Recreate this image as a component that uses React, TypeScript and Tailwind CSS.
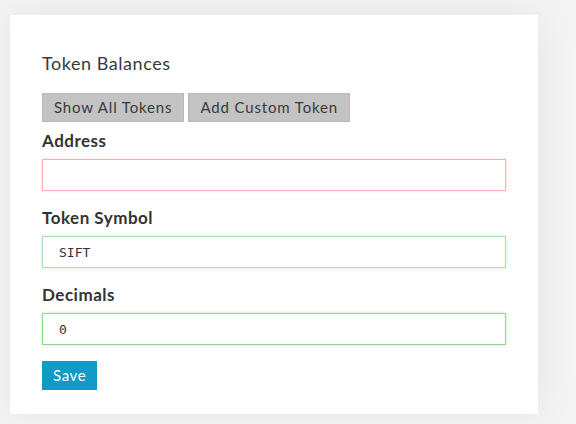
export default function App() {
  return (
    <div className="min-h-[424px] w-full bg-[#f4f4f4] pt-[15px] pb-[10px] pl-[10px] font-['Lato',sans-serif] text-[#333]">
      <div className="w-[528px] bg-white px-8 pt-[36px] pb-6 shadow-[0_0_40px_rgba(0,0,0,0.07)]">
        <h2 className="text-[18px] leading-6 font-normal tracking-[0.55px] text-[#3a3a3a]">Token Balances</h2>

        <div className="mt-[18px] flex gap-1">
          <button className="h-[29px] border border-[#b9b9b9] bg-[#c3c3c3] px-[11px] text-[15px] tracking-[0.85px] text-[#3a3a3a]">
            Show All Tokens
          </button>
          <button className="h-[29px] border border-[#b9b9b9] bg-[#c3c3c3] px-[11px] text-[15px] tracking-[0.85px] text-[#3a3a3a]">
            Add Custom Token
          </button>
        </div>

        <label className="mt-[7px] block text-[17px] leading-6 font-bold tracking-[0.5px]">Address</label>
        <input
          className="mt-[6px] block h-[32px] w-[464px] border border-[#f7b2aa] px-4 font-['DejaVu_Sans_Mono',monospace] text-[13px] text-[#333] shadow-[0_0_3px_rgba(247,150,140,0.35)] outline-none"
          defaultValue=""
        />

        <label className="mt-[15px] block text-[17px] leading-6 font-bold tracking-[0.5px]">Token Symbol</label>
        <input
          className="mt-[6px] block h-[32px] w-[464px] border border-[#a8dea8] px-4 font-['DejaVu_Sans_Mono',monospace] text-[13px] text-[#333] shadow-[0_0_3px_rgba(140,210,140,0.35)] outline-none"
          defaultValue="SIFT"
        />

        <label className="mt-[15px] block text-[17px] leading-6 font-bold tracking-[0.5px]">Decimals</label>
        <input
          className="mt-[6px] block h-[32px] w-[464px] border border-[#8fd68f] px-4 font-['DejaVu_Sans_Mono',monospace] text-[13px] text-[#333] shadow-[0_0_3px_rgba(120,200,120,0.4)] outline-none"
          defaultValue="0"
        />

        <button className="mt-[16px] h-[29px] bg-[#129ac6] px-[11px] text-[15px] tracking-[0.6px] text-white">
          Save
        </button>
      </div>
    </div>
  )
}
